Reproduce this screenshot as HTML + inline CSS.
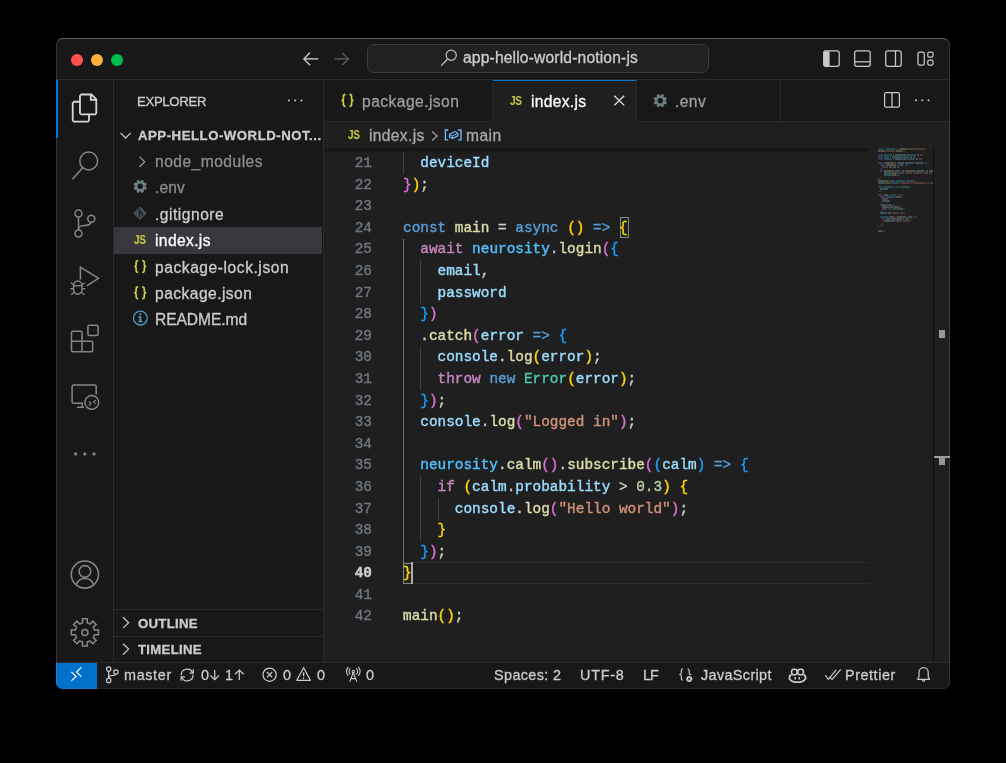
<!DOCTYPE html>
<html>
<head>
<meta charset="utf-8">
<title>index.js — app-hello-world-notion-js</title>
<style>
*{box-sizing:border-box;margin:0;padding:0}
html,body{width:1006px;height:763px;background:#000;overflow:hidden}
body{font-family:"Liberation Sans",sans-serif;color:#ccc;position:relative}
.a{position:absolute}
#win{position:absolute;left:0;top:0;width:1006px;height:763px;background:#181818;clip-path:inset(38px 56px 74px 56px round 7px)}
#frame{position:absolute;left:56px;top:38px;width:894px;height:651px;border-radius:7px;border:1px solid rgba(255,255,255,.13);border-top-color:rgba(255,255,255,.30);border-bottom-color:rgba(255,255,255,.07);pointer-events:none}
.t,#code,#nums{will-change:transform}
.t{-webkit-text-stroke:.3px}
#code,#nums{-webkit-text-stroke:.4px}
.bx{position:absolute;width:9px;height:21px;border:1px solid #858585;background:#1c241c}
.t{position:absolute;white-space:nowrap;line-height:20px;height:20px}
.ui{font-size:15.6px}
.sb{font-size:14.4px}
svg{position:absolute;overflow:visible}
/* editor */
#code{position:absolute;left:403px;top:153.1px;font-family:"Liberation Mono",monospace;font-size:14.4px;line-height:21.6px;color:#ccc}
#code div{height:21.6px;white-space:pre}
#nums{position:absolute;left:340px;width:32px;top:153.1px;font-family:"Liberation Mono",monospace;font-size:14.4px;line-height:21.6px;color:#6e7681;text-align:right}
#nums div{height:21.6px}
.k{color:#569cd6}.c{color:#c586c0}.f{color:#dcdcaa}.v{color:#9cdcfe}.n{color:#4fc1ff}.s{color:#ce9178}.m{color:#b5cea8}.y{color:#4ec9b0}
.b1{color:#ffd700}.b2{color:#da70d6}.b3{color:#179fff}
.g{position:absolute;width:1px;background:#404040}
</style>
</head>
<body>
<div id="win">

<!-- title bar -->
<div class="a" style="left:56px;top:38px;width:894px;height:42px;background:#181818;border-bottom:1px solid #2b2b2b"></div>
<div class="a" style="left:70.9px;top:53.9px;width:12.3px;height:12.3px;border-radius:50%;background:#ff4f4f"></div>
<div class="a" style="left:90.9px;top:53.9px;width:12.3px;height:12.3px;border-radius:50%;background:#ffb13c"></div>
<div class="a" style="left:110.9px;top:53.9px;width:12.3px;height:12.3px;border-radius:50%;background:#00bf4d"></div>
<div class="a" style="left:367px;top:44px;width:342px;height:29px;border-radius:7px;background:#212121;border:1px solid #3c3c3c"></div>

<!-- activity bar -->
<div class="a" style="left:56px;top:80px;width:58px;height:583px;border-right:1px solid #2b2b2b"></div>

<!-- side bar -->
<div class="a" style="left:114px;top:80px;width:210px;height:583px;border-right:1px solid #2b2b2b"></div>
<div class="a" style="left:114px;top:227px;width:208px;height:27px;background:#37373d"></div>
<div class="a" style="left:114px;top:609px;width:209px;height:1px;background:#2b2b2b"></div>
<div class="a" style="left:114px;top:636px;width:209px;height:1px;background:#2b2b2b"></div>

<!-- tabs -->
<div class="a" style="left:324px;top:80px;width:626px;height:42px;background:#181818;border-bottom:1px solid #2b2b2b"></div>
<div class="a" style="left:324px;top:80px;width:169px;height:42px;border-right:1px solid #2b2b2b;border-bottom:1px solid #2b2b2b"></div>
<div class="a" style="left:493px;top:80px;width:144px;height:42px;background:#1f1f1f;border-top:1px solid #0078d4;border-right:1px solid #2b2b2b"></div>
<div class="a" style="left:637px;top:80px;width:144px;height:42px;border-right:1px solid #2b2b2b;border-bottom:1px solid #2b2b2b"></div>

<!-- editor bg + breadcrumbs -->
<div class="a" style="left:324px;top:122px;width:626px;height:541px;background:#1f1f1f"></div>


<!-- editor content -->
<div class="a" style="left:324px;top:148px;width:545px;height:6px;background:linear-gradient(#000000aa,#00000000);opacity:.55"></div>
<div class="a" style="left:403px;top:562px;width:466px;height:21.7px;border-top:1px solid #2b2b2b;border-bottom:1px solid #2b2b2b"></div>
<div class="bx" style="left:403px;top:562.5px"></div>
<div class="bx" style="left:620px;top:217px"></div>
<div id="nums">
<div>21</div><div>22</div><div>23</div><div>24</div><div>25</div><div>26</div><div>27</div><div>28</div><div>29</div><div>30</div><div>31</div><div>32</div><div>33</div><div>34</div><div>35</div><div>36</div><div>37</div><div>38</div><div>39</div><div style="color:#ccc;font-weight:bold">40</div><div>41</div><div>42</div>
</div>
<div id="guides">
<div class="g" style="left:403px;top:152px;height:21.7px"></div>
<div class="g" style="left:403px;top:238.5px;height:324.0px;background:#707070"></div>
<div class="g" style="left:420px;top:260.1px;height:43.2px"></div>
<div class="g" style="left:420px;top:346.5px;height:43.2px"></div>
<div class="g" style="left:420px;top:476.1px;height:64.8px"></div>
<div class="g" style="left:438px;top:497.7px;height:21.6px"></div>
</div>
<div id="code">
<div>  <span class="v">deviceId</span></div>
<div><span class="b2">}</span><span class="b1">)</span>;</div>
<div> </div>
<div><span class="k">const</span> <span class="f">main</span> = <span class="k">async</span> <span class="b1">()</span> <span class="k">=&gt;</span> <span class="b1 bm">{</span></div>
<div>  <span class="c">await</span> <span class="n">neurosity</span>.<span class="f">login</span><span class="b2">(</span><span class="b3">{</span></div>
<div>    <span class="v">email</span>,</div>
<div>    <span class="v">password</span></div>
<div>  <span class="b3">}</span><span class="b2">)</span></div>
<div>  .<span class="f">catch</span><span class="b2">(</span><span class="v">error</span> <span class="k">=&gt;</span> <span class="b3">{</span></div>
<div>    <span class="v">console</span>.<span class="f">log</span><span class="b1">(</span><span class="v">error</span><span class="b1">)</span>;</div>
<div>    <span class="c">throw</span> <span class="k">new</span> <span class="y">Error</span><span class="b1">(</span><span class="v">error</span><span class="b1">)</span>;</div>
<div>  <span class="b3">}</span><span class="b2">)</span>;</div>
<div>  <span class="v">console</span>.<span class="f">log</span><span class="b2">(</span><span class="s">"Logged in"</span><span class="b2">)</span>;</div>
<div> </div>
<div>  <span class="n">neurosity</span>.<span class="f">calm</span><span class="b2">()</span>.<span class="f">subscribe</span><span class="b2">(</span><span class="b3">(</span><span class="v">calm</span><span class="b3">)</span> <span class="k">=&gt;</span> <span class="b3">{</span></div>
<div>    <span class="c">if</span> <span class="b1">(</span><span class="v">calm</span>.<span class="v">probability</span> &gt; <span class="m">0.3</span><span class="b1">)</span> <span class="b1">{</span></div>
<div>      <span class="v">console</span>.<span class="f">log</span><span class="b2">(</span><span class="s">"Hello world"</span><span class="b2">)</span>;</div>
<div>    <span class="b1">}</span></div>
<div>  <span class="b3">}</span><span class="b2">)</span>;</div>
<div><span class="b1 bm">}</span></div>
<div> </div>
<div><span class="f">main</span><span class="b1">()</span>;</div>
</div>
<div class="a" style="left:410.6px;top:562.3px;width:2.4px;height:21.5px;background:#aeafad"></div>

<!-- minimap -->
<svg class="a" style="left:0;top:0" width="1006" height="763" viewBox="0 0 1006 763" >
<g opacity=".4">
<rect x="878" y="148.4" width="5" height="1.3" fill="#569cd6"/>
<rect x="884" y="148.4" width="1" height="1.3" fill="#ffd700" opacity=".45"/>
<rect x="886" y="148.4" width="9" height="1.3" fill="#4fc1ff"/>
<rect x="896" y="148.4" width="1" height="1.3" fill="#ffd700" opacity=".45"/>
<rect x="898" y="148.4" width="1" height="1.3" fill="#cccccc"/>
<rect x="900" y="148.4" width="7" height="1.3" fill="#dcdcaa"/>
<rect x="907" y="148.4" width="1" height="1.3" fill="#ffd700" opacity=".45"/>
<rect x="908" y="148.4" width="16" height="1.3" fill="#ce9178"/>
<rect x="924" y="148.4" width="1" height="1.3" fill="#ffd700" opacity=".45"/>
<rect x="925" y="148.4" width="1" height="1.3" fill="#cccccc" opacity=".5"/>
<rect x="878" y="150.4" width="7" height="1.3" fill="#dcdcaa"/>
<rect x="885" y="150.4" width="1" height="1.3" fill="#ffd700" opacity=".45"/>
<rect x="886" y="150.4" width="8" height="1.3" fill="#ce9178"/>
<rect x="894" y="150.4" width="1" height="1.3" fill="#ffd700" opacity=".45"/>
<rect x="895" y="150.4" width="1" height="1.3" fill="#cccccc" opacity=".5"/>
<rect x="896" y="150.4" width="6" height="1.3" fill="#dcdcaa"/>
<rect x="902" y="150.4" width="2" height="1.3" fill="#ffd700" opacity=".45"/>
<rect x="904" y="150.4" width="1" height="1.3" fill="#cccccc" opacity=".5"/>
<rect x="878" y="154.4" width="5" height="1.3" fill="#569cd6"/>
<rect x="884" y="154.4" width="8" height="1.3" fill="#4fc1ff"/>
<rect x="893" y="154.4" width="1" height="1.3" fill="#cccccc"/>
<rect x="895" y="154.4" width="7" height="1.3" fill="#9cdcfe"/>
<rect x="902" y="154.4" width="1" height="1.3" fill="#cccccc" opacity=".5"/>
<rect x="903" y="154.4" width="3" height="1.3" fill="#9cdcfe"/>
<rect x="906" y="154.4" width="1" height="1.3" fill="#cccccc" opacity=".5"/>
<rect x="907" y="154.4" width="9" height="1.3" fill="#4fc1ff"/>
<rect x="917" y="154.4" width="2" height="1.3" fill="#cccccc"/>
<rect x="920" y="154.4" width="2" height="1.3" fill="#ce9178"/>
<rect x="922" y="154.4" width="1" height="1.3" fill="#cccccc" opacity=".5"/>
<rect x="878" y="156.4" width="5" height="1.3" fill="#569cd6"/>
<rect x="884" y="156.4" width="5" height="1.3" fill="#4fc1ff"/>
<rect x="890" y="156.4" width="1" height="1.3" fill="#cccccc"/>
<rect x="892" y="156.4" width="7" height="1.3" fill="#9cdcfe"/>
<rect x="899" y="156.4" width="1" height="1.3" fill="#cccccc" opacity=".5"/>
<rect x="900" y="156.4" width="3" height="1.3" fill="#9cdcfe"/>
<rect x="903" y="156.4" width="1" height="1.3" fill="#cccccc" opacity=".5"/>
<rect x="904" y="156.4" width="5" height="1.3" fill="#4fc1ff"/>
<rect x="910" y="156.4" width="2" height="1.3" fill="#cccccc"/>
<rect x="913" y="156.4" width="2" height="1.3" fill="#ce9178"/>
<rect x="915" y="156.4" width="1" height="1.3" fill="#cccccc" opacity=".5"/>
<rect x="878" y="158.4" width="5" height="1.3" fill="#569cd6"/>
<rect x="884" y="158.4" width="8" height="1.3" fill="#4fc1ff"/>
<rect x="893" y="158.4" width="1" height="1.3" fill="#cccccc"/>
<rect x="895" y="158.4" width="7" height="1.3" fill="#9cdcfe"/>
<rect x="902" y="158.4" width="1" height="1.3" fill="#cccccc" opacity=".5"/>
<rect x="903" y="158.4" width="3" height="1.3" fill="#9cdcfe"/>
<rect x="906" y="158.4" width="1" height="1.3" fill="#cccccc" opacity=".5"/>
<rect x="907" y="158.4" width="8" height="1.3" fill="#4fc1ff"/>
<rect x="916" y="158.4" width="2" height="1.3" fill="#cccccc"/>
<rect x="919" y="158.4" width="2" height="1.3" fill="#ce9178"/>
<rect x="921" y="158.4" width="1" height="1.3" fill="#cccccc" opacity=".5"/>
<rect x="878" y="162.4" width="5" height="1.3" fill="#569cd6"/>
<rect x="884" y="162.4" width="10" height="1.3" fill="#dcdcaa"/>
<rect x="895" y="162.4" width="1" height="1.3" fill="#cccccc"/>
<rect x="897" y="162.4" width="1" height="1.3" fill="#ffd700" opacity=".45"/>
<rect x="898" y="162.4" width="6" height="1.3" fill="#9cdcfe"/>
<rect x="905" y="162.4" width="9" height="1.3" fill="#9cdcfe"/>
<rect x="915" y="162.4" width="8" height="1.3" fill="#9cdcfe"/>
<rect x="923" y="162.4" width="1" height="1.3" fill="#ffd700" opacity=".45"/>
<rect x="925" y="162.4" width="2" height="1.3" fill="#569cd6"/>
<rect x="928" y="162.4" width="1" height="1.3" fill="#ffd700" opacity=".45"/>
<rect x="880" y="164.4" width="5" height="1.3" fill="#569cd6"/>
<rect x="886" y="164.4" width="10" height="1.3" fill="#dcdcaa"/>
<rect x="897" y="164.4" width="1" height="1.3" fill="#cccccc"/>
<rect x="899" y="164.4" width="1" height="1.3" fill="#da70d6" opacity=".45"/>
<rect x="900" y="164.4" width="3" height="1.3" fill="#9cdcfe"/>
<rect x="903" y="164.4" width="1" height="1.3" fill="#da70d6" opacity=".45"/>
<rect x="905" y="164.4" width="2" height="1.3" fill="#569cd6"/>
<rect x="908" y="164.4" width="1" height="1.3" fill="#da70d6" opacity=".45"/>
<rect x="882" y="166.4" width="6" height="1.3" fill="#c586c0"/>
<rect x="889" y="166.4" width="3" height="1.3" fill="#9cdcfe"/>
<rect x="893" y="166.4" width="3" height="1.3" fill="#cccccc"/>
<rect x="897" y="166.4" width="2" height="1.3" fill="#ce9178"/>
<rect x="899" y="166.4" width="1" height="1.3" fill="#cccccc" opacity=".5"/>
<rect x="880" y="168.4" width="1" height="1.3" fill="#da70d6" opacity=".45"/>
<rect x="881" y="168.4" width="1" height="1.3" fill="#cccccc" opacity=".5"/>
<rect x="880" y="170.4" width="2" height="1.3" fill="#c586c0"/>
<rect x="883" y="170.4" width="1" height="1.3" fill="#da70d6" opacity=".45"/>
<rect x="884" y="170.4" width="10" height="1.3" fill="#dcdcaa"/>
<rect x="894" y="170.4" width="1" height="1.3" fill="#179fff" opacity=".45"/>
<rect x="895" y="170.4" width="5" height="1.3" fill="#9cdcfe"/>
<rect x="900" y="170.4" width="1" height="1.3" fill="#179fff" opacity=".45"/>
<rect x="902" y="170.4" width="2" height="1.3" fill="#cccccc"/>
<rect x="905" y="170.4" width="10" height="1.3" fill="#dcdcaa"/>
<rect x="915" y="170.4" width="1" height="1.3" fill="#179fff" opacity=".45"/>
<rect x="916" y="170.4" width="8" height="1.3" fill="#9cdcfe"/>
<rect x="924" y="170.4" width="1" height="1.3" fill="#179fff" opacity=".45"/>
<rect x="926" y="170.4" width="2" height="1.3" fill="#cccccc"/>
<rect x="929" y="170.4" width="4" height="1.3" fill="#dcdcaa"/>
<rect x="884" y="172.4" width="7" height="1.3" fill="#9cdcfe"/>
<rect x="891" y="172.4" width="1" height="1.3" fill="#cccccc" opacity=".5"/>
<rect x="892" y="172.4" width="5" height="1.3" fill="#dcdcaa"/>
<rect x="897" y="172.4" width="1" height="1.3" fill="#179fff" opacity=".45"/>
<rect x="898" y="172.4" width="7" height="1.3" fill="#ce9178"/>
<rect x="906" y="172.4" width="6" height="1.3" fill="#ce9178"/>
<rect x="913" y="172.4" width="9" height="1.3" fill="#ce9178"/>
<rect x="923" y="172.4" width="5" height="1.3" fill="#ce9178"/>
<rect x="929" y="172.4" width="3" height="1.3" fill="#ce9178"/>
<rect x="884" y="174.4" width="7" height="1.3" fill="#9cdcfe"/>
<rect x="891" y="174.4" width="1" height="1.3" fill="#cccccc" opacity=".5"/>
<rect x="892" y="174.4" width="4" height="1.3" fill="#dcdcaa"/>
<rect x="896" y="174.4" width="1" height="1.3" fill="#179fff" opacity=".45"/>
<rect x="897" y="174.4" width="1" height="1.3" fill="#b5cea8"/>
<rect x="898" y="174.4" width="1" height="1.3" fill="#179fff" opacity=".45"/>
<rect x="899" y="174.4" width="1" height="1.3" fill="#cccccc" opacity=".5"/>
<rect x="880" y="176.4" width="1" height="1.3" fill="#da70d6" opacity=".45"/>
<rect x="878" y="178.4" width="1" height="1.3" fill="#ffd700" opacity=".45"/>
<rect x="879" y="178.4" width="1" height="1.3" fill="#cccccc" opacity=".5"/>
<rect x="878" y="180.4" width="10" height="1.3" fill="#dcdcaa"/>
<rect x="888" y="180.4" width="1" height="1.3" fill="#ffd700" opacity=".45"/>
<rect x="889" y="180.4" width="6" height="1.3" fill="#4fc1ff"/>
<rect x="896" y="180.4" width="9" height="1.3" fill="#4fc1ff"/>
<rect x="906" y="180.4" width="8" height="1.3" fill="#4fc1ff"/>
<rect x="914" y="180.4" width="1" height="1.3" fill="#ffd700" opacity=".45"/>
<rect x="915" y="180.4" width="1" height="1.3" fill="#cccccc" opacity=".5"/>
<rect x="878" y="182.4" width="7" height="1.3" fill="#9cdcfe"/>
<rect x="885" y="182.4" width="1" height="1.3" fill="#cccccc" opacity=".5"/>
<rect x="886" y="182.4" width="3" height="1.3" fill="#dcdcaa"/>
<rect x="889" y="182.4" width="1" height="1.3" fill="#ffd700" opacity=".45"/>
<rect x="890" y="182.4" width="3" height="1.3" fill="#ce9178"/>
<rect x="893" y="182.4" width="5" height="1.3" fill="#4fc1ff"/>
<rect x="898" y="182.4" width="1" height="1.3" fill="#569cd6"/>
<rect x="900" y="182.4" width="10" height="1.3" fill="#ce9178"/>
<rect x="911" y="182.4" width="2" height="1.3" fill="#ce9178"/>
<rect x="914" y="182.4" width="12" height="1.3" fill="#ce9178"/>
<rect x="927" y="182.4" width="2" height="1.3" fill="#ce9178"/>
<rect x="930" y="182.4" width="2" height="1.3" fill="#569cd6"/>
<rect x="932" y="182.4" width="1" height="1.3" fill="#4fc1ff"/>
<rect x="878" y="186.4" width="5" height="1.3" fill="#569cd6"/>
<rect x="884" y="186.4" width="9" height="1.3" fill="#4fc1ff"/>
<rect x="894" y="186.4" width="1" height="1.3" fill="#cccccc"/>
<rect x="896" y="186.4" width="3" height="1.3" fill="#569cd6"/>
<rect x="900" y="186.4" width="9" height="1.3" fill="#4ec9b0"/>
<rect x="909" y="186.4" width="1" height="1.3" fill="#ffd700" opacity=".45"/>
<rect x="910" y="186.4" width="1" height="1.3" fill="#da70d6" opacity=".45"/>
<rect x="880" y="188.4" width="8" height="1.3" fill="#9cdcfe"/>
<rect x="878" y="190.4" width="1" height="1.3" fill="#da70d6" opacity=".45"/>
<rect x="879" y="190.4" width="1" height="1.3" fill="#ffd700" opacity=".45"/>
<rect x="880" y="190.4" width="1" height="1.3" fill="#cccccc" opacity=".5"/>
<rect x="878" y="194.4" width="5" height="1.3" fill="#569cd6"/>
<rect x="884" y="194.4" width="4" height="1.3" fill="#dcdcaa"/>
<rect x="889" y="194.4" width="1" height="1.3" fill="#cccccc"/>
<rect x="891" y="194.4" width="5" height="1.3" fill="#569cd6"/>
<rect x="897" y="194.4" width="2" height="1.3" fill="#ffd700" opacity=".45"/>
<rect x="900" y="194.4" width="2" height="1.3" fill="#569cd6"/>
<rect x="903" y="194.4" width="1" height="1.3" fill="#ffd700" opacity=".45"/>
<rect x="880" y="196.4" width="5" height="1.3" fill="#c586c0"/>
<rect x="886" y="196.4" width="9" height="1.3" fill="#4fc1ff"/>
<rect x="895" y="196.4" width="1" height="1.3" fill="#cccccc" opacity=".5"/>
<rect x="896" y="196.4" width="5" height="1.3" fill="#dcdcaa"/>
<rect x="901" y="196.4" width="1" height="1.3" fill="#da70d6" opacity=".45"/>
<rect x="902" y="196.4" width="1" height="1.3" fill="#179fff" opacity=".45"/>
<rect x="882" y="198.4" width="5" height="1.3" fill="#9cdcfe"/>
<rect x="887" y="198.4" width="1" height="1.3" fill="#cccccc" opacity=".5"/>
<rect x="882" y="200.4" width="8" height="1.3" fill="#9cdcfe"/>
<rect x="880" y="202.4" width="1" height="1.3" fill="#179fff" opacity=".45"/>
<rect x="881" y="202.4" width="1" height="1.3" fill="#da70d6" opacity=".45"/>
<rect x="880" y="204.4" width="1" height="1.3" fill="#cccccc" opacity=".5"/>
<rect x="881" y="204.4" width="5" height="1.3" fill="#dcdcaa"/>
<rect x="886" y="204.4" width="1" height="1.3" fill="#da70d6" opacity=".45"/>
<rect x="887" y="204.4" width="5" height="1.3" fill="#9cdcfe"/>
<rect x="893" y="204.4" width="2" height="1.3" fill="#569cd6"/>
<rect x="896" y="204.4" width="1" height="1.3" fill="#179fff" opacity=".45"/>
<rect x="882" y="206.4" width="7" height="1.3" fill="#9cdcfe"/>
<rect x="889" y="206.4" width="1" height="1.3" fill="#cccccc" opacity=".5"/>
<rect x="890" y="206.4" width="3" height="1.3" fill="#dcdcaa"/>
<rect x="893" y="206.4" width="1" height="1.3" fill="#ffd700" opacity=".45"/>
<rect x="894" y="206.4" width="5" height="1.3" fill="#9cdcfe"/>
<rect x="899" y="206.4" width="1" height="1.3" fill="#ffd700" opacity=".45"/>
<rect x="900" y="206.4" width="1" height="1.3" fill="#cccccc" opacity=".5"/>
<rect x="882" y="208.4" width="5" height="1.3" fill="#c586c0"/>
<rect x="888" y="208.4" width="3" height="1.3" fill="#569cd6"/>
<rect x="892" y="208.4" width="5" height="1.3" fill="#4ec9b0"/>
<rect x="897" y="208.4" width="1" height="1.3" fill="#ffd700" opacity=".45"/>
<rect x="898" y="208.4" width="5" height="1.3" fill="#9cdcfe"/>
<rect x="903" y="208.4" width="1" height="1.3" fill="#ffd700" opacity=".45"/>
<rect x="904" y="208.4" width="1" height="1.3" fill="#cccccc" opacity=".5"/>
<rect x="880" y="210.4" width="1" height="1.3" fill="#179fff" opacity=".45"/>
<rect x="881" y="210.4" width="1" height="1.3" fill="#da70d6" opacity=".45"/>
<rect x="882" y="210.4" width="1" height="1.3" fill="#cccccc" opacity=".5"/>
<rect x="880" y="212.4" width="7" height="1.3" fill="#9cdcfe"/>
<rect x="887" y="212.4" width="1" height="1.3" fill="#cccccc" opacity=".5"/>
<rect x="888" y="212.4" width="3" height="1.3" fill="#dcdcaa"/>
<rect x="891" y="212.4" width="1" height="1.3" fill="#da70d6" opacity=".45"/>
<rect x="892" y="212.4" width="7" height="1.3" fill="#ce9178"/>
<rect x="900" y="212.4" width="3" height="1.3" fill="#ce9178"/>
<rect x="903" y="212.4" width="1" height="1.3" fill="#da70d6" opacity=".45"/>
<rect x="904" y="212.4" width="1" height="1.3" fill="#cccccc" opacity=".5"/>
<rect x="880" y="216.4" width="9" height="1.3" fill="#4fc1ff"/>
<rect x="889" y="216.4" width="1" height="1.3" fill="#cccccc" opacity=".5"/>
<rect x="890" y="216.4" width="4" height="1.3" fill="#dcdcaa"/>
<rect x="894" y="216.4" width="2" height="1.3" fill="#da70d6" opacity=".45"/>
<rect x="896" y="216.4" width="1" height="1.3" fill="#cccccc" opacity=".5"/>
<rect x="897" y="216.4" width="9" height="1.3" fill="#dcdcaa"/>
<rect x="906" y="216.4" width="1" height="1.3" fill="#da70d6" opacity=".45"/>
<rect x="907" y="216.4" width="1" height="1.3" fill="#179fff" opacity=".45"/>
<rect x="908" y="216.4" width="4" height="1.3" fill="#9cdcfe"/>
<rect x="912" y="216.4" width="1" height="1.3" fill="#179fff" opacity=".45"/>
<rect x="914" y="216.4" width="2" height="1.3" fill="#569cd6"/>
<rect x="917" y="216.4" width="1" height="1.3" fill="#179fff" opacity=".45"/>
<rect x="882" y="218.4" width="2" height="1.3" fill="#c586c0"/>
<rect x="885" y="218.4" width="1" height="1.3" fill="#ffd700" opacity=".45"/>
<rect x="886" y="218.4" width="4" height="1.3" fill="#9cdcfe"/>
<rect x="890" y="218.4" width="1" height="1.3" fill="#cccccc" opacity=".5"/>
<rect x="891" y="218.4" width="11" height="1.3" fill="#9cdcfe"/>
<rect x="903" y="218.4" width="1" height="1.3" fill="#cccccc"/>
<rect x="905" y="218.4" width="3" height="1.3" fill="#b5cea8"/>
<rect x="908" y="218.4" width="1" height="1.3" fill="#ffd700" opacity=".45"/>
<rect x="910" y="218.4" width="1" height="1.3" fill="#ffd700" opacity=".45"/>
<rect x="884" y="220.4" width="7" height="1.3" fill="#9cdcfe"/>
<rect x="891" y="220.4" width="1" height="1.3" fill="#cccccc" opacity=".5"/>
<rect x="892" y="220.4" width="3" height="1.3" fill="#dcdcaa"/>
<rect x="895" y="220.4" width="1" height="1.3" fill="#da70d6" opacity=".45"/>
<rect x="896" y="220.4" width="6" height="1.3" fill="#ce9178"/>
<rect x="903" y="220.4" width="6" height="1.3" fill="#ce9178"/>
<rect x="909" y="220.4" width="1" height="1.3" fill="#da70d6" opacity=".45"/>
<rect x="910" y="220.4" width="1" height="1.3" fill="#cccccc" opacity=".5"/>
<rect x="882" y="222.4" width="1" height="1.3" fill="#ffd700" opacity=".45"/>
<rect x="880" y="224.4" width="1" height="1.3" fill="#179fff" opacity=".45"/>
<rect x="881" y="224.4" width="1" height="1.3" fill="#da70d6" opacity=".45"/>
<rect x="882" y="224.4" width="1" height="1.3" fill="#cccccc" opacity=".5"/>
<rect x="878" y="226.4" width="1" height="1.3" fill="#ffd700" opacity=".45"/>
<rect x="878" y="230.4" width="4" height="1.3" fill="#dcdcaa"/>
<rect x="882" y="230.4" width="2" height="1.3" fill="#ffd700" opacity=".45"/>
<rect x="884" y="230.4" width="1" height="1.3" fill="#cccccc" opacity=".5"/>
</g></svg>
<div class="a" style="left:933px;top:148px;width:1px;height:515px;background:#0c0e11"></div>
<div class="a" style="left:939px;top:330px;width:6px;height:8px;background:#979797"></div>
<div class="a" style="left:934px;top:456px;width:16px;height:2px;background:#9c9c9c"></div>
<div class="a" style="left:939px;top:458px;width:6px;height:7px;background:#979797"></div>

<!-- status bar -->
<div class="a" style="left:56px;top:662px;width:894px;height:28px;background:#181818;border-top:1px solid #2b2b2b"></div>
<div class="a" style="left:56px;top:663px;width:41px;height:27px;background:#0070cb"></div>

<!--ICONS-START-->
<svg class="a" style="left:0;top:0" width="1006" height="763" viewBox="0 0 1006 763" fill="none" stroke-linecap="butt" stroke-linejoin="miter">
<g stroke="#c8c8c8" stroke-width="1.4"><path d="M318.2 58.9H304"/><path d="M310.1 52.6L303.9 58.9L310.1 65.2"/></g>
<g stroke="#5c5c5c" stroke-width="1.4"><path d="M334.6 58.9H348.4"/><path d="M342.3 52.9L348.5 58.9L342.3 64.9"/></g>
<g stroke="#bdbdbd" stroke-width="1.25"><circle cx="451.2" cy="55.2" r="5.1"/><path d="M447.6 59L441.2 65.7"/></g>
<g stroke="#c8c8c8" stroke-width="1.25">
<rect x="823.7" y="50.9" width="15.5" height="15.4" rx="2"/><path d="M824 51.3H829.6V66H824Z" fill="#c8c8c8" stroke="none"/>
<rect x="854.7" y="50.9" width="15.5" height="15.4" rx="2"/><path d="M854.7 61.8H870.2"/>
<rect x="885.7" y="50.9" width="15.5" height="15.4" rx="2"/><path d="M895.5 50.9V66.3"/>
<rect x="918" y="52.1" width="6.3" height="13" rx="1.6"/><rect x="927.8" y="52.1" width="5.2" height="5" rx="1.4"/><rect x="927.8" y="60.2" width="5.2" height="5" rx="1.4"/>
</g>
<g stroke="#cbcb41" stroke-width="1.7"><path d="M345.50 94.41C343.40 94.41 343.40 95.42 343.40 96.85V98.67C343.40 99.89 342.60 100.40 341.50 100.40C342.60 100.40 343.40 100.91 343.40 102.13V103.95C343.40 105.38 343.40 106.39 345.50 106.39"/><path d="M349.50 94.41C351.60 94.41 351.60 95.42 351.60 96.85V98.67C351.60 99.89 352.40 100.40 353.50 100.40C352.40 100.40 351.60 100.91 351.60 102.13V103.95C351.60 105.38 351.60 106.39 349.50 106.39"/></g>
<g stroke="#cbcb41" stroke-width="1.7"><path d="M138.20 260.51C136.10 260.51 136.10 261.52 136.10 262.95V264.77C136.10 265.99 135.30 266.50 134.20 266.50C135.30 266.50 136.10 267.01 136.10 268.23V270.05C136.10 271.48 136.10 272.49 138.20 272.49"/><path d="M142.20 260.51C144.30 260.51 144.30 261.52 144.30 262.95V264.77C144.30 265.99 145.10 266.50 146.20 266.50C145.10 266.50 144.30 267.01 144.30 268.23V270.05C144.30 271.48 144.30 272.49 142.20 272.49"/></g>
<g stroke="#cbcb41" stroke-width="1.7"><path d="M138.20 286.81C136.10 286.81 136.10 287.82 136.10 289.25V291.07C136.10 292.29 135.30 292.80 134.20 292.80C135.30 292.80 136.10 293.31 136.10 294.53V296.35C136.10 297.78 136.10 298.79 138.20 298.79"/><path d="M142.20 286.81C144.30 286.81 144.30 287.82 144.30 289.25V291.07C144.30 292.29 145.10 292.80 146.20 292.80C145.10 292.80 144.30 293.31 144.30 294.53V296.35C144.30 297.78 144.30 298.79 142.20 298.79"/></g>
<g stroke="#e4e4e4" stroke-width="1.3"><path d="M614.2 95.8L624.2 105.4M624.2 95.8L614.2 105.4"/></g>
<path d="M660.87 95.53 L661.63 94.03 L664.08 95.05 L663.55 96.64 L664.36 97.45 L665.95 96.92 L666.97 99.37 L665.47 100.13 L665.47 101.27 L666.97 102.03 L665.95 104.48 L664.36 103.95 L663.55 104.76 L664.08 106.35 L661.63 107.37 L660.87 105.87 L659.73 105.87 L658.97 107.37 L656.52 106.35 L657.05 104.76 L656.24 103.95 L654.65 104.48 L653.63 102.03 L655.13 101.27 L655.13 100.13 L653.63 99.37 L654.65 96.92 L656.24 97.45 L657.05 96.64 L656.52 95.05 L658.97 94.03 L659.73 95.53Z" fill="#6d8086"/><circle cx="660.3" cy="100.7" r="2.7" fill="#181818"/>
<path d="M140.77 181.13 L141.53 179.63 L143.98 180.65 L143.45 182.24 L144.26 183.05 L145.85 182.52 L146.87 184.97 L145.37 185.73 L145.37 186.87 L146.87 187.63 L145.85 190.08 L144.26 189.55 L143.45 190.36 L143.98 191.95 L141.53 192.97 L140.77 191.47 L139.63 191.47 L138.87 192.97 L136.42 191.95 L136.95 190.36 L136.14 189.55 L134.55 190.08 L133.53 187.63 L135.03 186.87 L135.03 185.73 L133.53 184.97 L134.55 182.52 L136.14 183.05 L136.95 182.24 L136.42 180.65 L138.87 179.63 L139.63 181.13Z" fill="#6d8086"/><circle cx="140.2" cy="186.3" r="2.7" fill="#181818"/>
<g stroke="#c8c8c8" stroke-width="1.25"><rect x="884.6" y="92.6" width="14.8" height="14.6" rx="1.6"/><path d="M892 92.6V107.2"/></g>
<circle cx="916.1" cy="100.3" r="1" fill="#c8c8c8"/>
<circle cx="922.3" cy="100.3" r="1" fill="#c8c8c8"/>
<circle cx="928.5" cy="100.3" r="1" fill="#c8c8c8"/>
<circle cx="289" cy="100.4" r="1" fill="#c8c8c8"/>
<circle cx="295.2" cy="100.4" r="1" fill="#c8c8c8"/>
<circle cx="301.4" cy="100.4" r="1" fill="#c8c8c8"/>
<path d="M432 131.4L437.3 135.9L432 140.4" stroke="#a0a0a0" stroke-width="1.25"/>
<g stroke="#75beff" stroke-width="1.3"><path d="M448.2 130H445.4V139.8H448.2"/><path d="M458.2 130H461V139.8H458.2"/><path d="M449.500 134.300L455.100 131.600L457.900 133.300V135.800L452.200 138.600L449.500 136.900Z" stroke-width="1.15"/><path d="M449.700 134.500L452.300 136.100L457.800 133.400M452.300 136.100V138.400" stroke-width="0.95"/></g>
<path d="M120.5 132.9L125.6 138L130.7 132.9" stroke="#c8c8c8" stroke-width="1.25"/>
<path d="M139.6 156.6L144.6 161.8L139.6 167" stroke="#9a9a9a" stroke-width="1.25"/>
<path d="M123.1 617.3L128.6 622.7L123.1 628.1" stroke="#c8c8c8" stroke-width="1.25"/>
<path d="M123.1 643.7L128.6 649.1L123.1 654.5" stroke="#c8c8c8" stroke-width="1.25"/>
<path d="M140 206.5L146.8 213.3L140 220.1L133.2 213.3Z" fill="#41535b"/>
<g stroke="#181818" stroke-width="1.1"><path d="M139.3 208.5V217.6"/><path d="M139.5 211L142.4 213.6V216.4"/></g>
<circle cx="140.4" cy="318.1" r="6.9" stroke="#519aba" stroke-width="1.3"/>
<g fill="#519aba"><circle cx="140.2" cy="314.3" r="1.15"/><path d="M138.3 316.3H141.3V321.1H142.5V322.2H138.2V321.1H139.4V317.4H138.3Z"/></g>
<path transform="translate(70.6 93.6) scale(1.2083333333333333)" fill="#d7d7d7" d="M17.5 0h-9L7 1.5V6H2.5L1 7.500v15.07L2.5 24h12.07L16 22.57V18h4.7l1.3-1.43V4.5L17.500 0zm0 2.120l2.380 2.380H17.500V2.120zm-3 20.380h-12v-15H7v9.07L8.500 18h6v4.500zm6-6h-12v-15H16V6h4.500v10.500z"/>
<g stroke="#868686" stroke-width="1.5"><circle cx="88.7" cy="161" r="8.9"/><path d="M82.7 167.8L72.4 179.2"/></g>
<g stroke="#868686" stroke-width="1.5"><circle cx="78.5" cy="213.6" r="3.5"/><circle cx="78.5" cy="233.6" r="3.5"/><circle cx="91.3" cy="218.8" r="3.5"/><path d="M78.5 217.1V230.1"/><path d="M78.5 229.5C78.5 225.6 81.5 225.4 85 225.4C88.8 225.4 90.6 224.3 91.1 222.3"/></g>
<g stroke="#868686" stroke-width="1.5"><path d="M80.4 279.4V267L98.500 278.300L86.800 285.900"/>
<path d="M73.6 285.7V289.3A4.2 4.9 0 0 0 82 289.3V285.7A4.2 4.600 0 0 0 73.600 285.7Z"/><path d="M73.6 285.7H82" stroke-width="1.400"/>
<path d="M73.8 284.9L70.900 282.800M81.800 284.900L84.700 282.800M73.600 288.700H70.300M82 288.700H85.300M74.100 292.300L71.200 294.700M81.500 292.300L84.400 294.700" stroke-width="1.400"/></g>
<g stroke="#868686" stroke-width="1.5"><path d="M71.5 341.3V332.8Q71.5 331.3 73 331.3H80.5Q82 331.300 82 332.8V341.3"/><path d="M71.5 341.3H91.2Q92.700 341.300 92.700 342.800V350.2Q92.7 351.700 91.200 351.700H73Q71.5 351.700 71.5 350.200Z"/><path d="M82 341.3V351.7"/><rect x="87.900" y="325.2" width="10.2" height="10.2" rx="1.5"/></g>
<g stroke="#868686" stroke-width="1.5"><path d="M83 403.3H73.6Q72.1 403.300 72.100 401.800V386.400Q72.1 384.900 73.600 384.900H94.700Q96.200 384.900 96.200 386.400V394.600"/><path d="M82.300 403.3V407.200M77 407.200H84" stroke-width="1.4"/><circle cx="91.8" cy="402.3" r="6.900"/><path d="M88.900 401.300L90.800 403.400L89.100 405.900M95.500 400L93.600 402L95.500 403.900" stroke-width="1.2"/></g>
<circle cx="75.6" cy="453.9" r="1.6" fill="#868686"/>
<circle cx="84.8" cy="453.9" r="1.6" fill="#868686"/>
<circle cx="94" cy="453.9" r="1.6" fill="#868686"/>
<g stroke="#868686" stroke-width="1.55"><circle cx="84.9" cy="574.5" r="13.6"/><circle cx="84.9" cy="571.4" r="5.8"/><path d="M76.300 584.800A9 9 0 0 1 93.500 584.800"/></g>
<path d="M82.59 622.77 L82.53 618.81 L87.27 618.81 L87.21 622.77 L90.07 623.96 L92.84 621.11 L96.19 624.46 L93.34 627.23 L94.53 630.09 L98.49 630.03 L98.49 634.77 L94.53 634.71 L93.34 637.57 L96.19 640.34 L92.84 643.69 L90.07 640.84 L87.21 642.03 L87.27 645.99 L82.53 645.99 L82.59 642.03 L79.73 640.84 L76.96 643.69 L73.61 640.34 L76.46 637.57 L75.27 634.71 L71.31 634.77 L71.31 630.03 L75.27 630.09 L76.46 627.23 L73.61 624.46 L76.96 621.11 L79.73 623.96Z" stroke="#868686" stroke-width="1.55" stroke-linejoin="miter"/><circle cx="84.9" cy="632.4" r="3" stroke="#868686" stroke-width="1.55"/>
<g stroke="#fff" stroke-width="1.2"><path d="M71.3 671.900L76.100 676.400L71.300 680.900"/><path d="M81.400 667.400L76.600 672L81.400 676.600"/></g>
<g stroke="#cccccc" stroke-width="1.2"><circle cx="108.7" cy="669.1" r="2.2"/><circle cx="108.700" cy="680.4" r="2.2"/><circle cx="115.9" cy="672" r="2.2"/><path d="M108.7 671.300V678.200"/><path d="M108.7 677.9C108.700 675.600 110.900 675.600 112.600 675.500C114.700 675.400 115.700 675 115.900 674.200"/></g>
<g stroke="#cccccc" stroke-width="1.2"><path d="M181.300 675.200A5.900 5.900 0 0 1 192.700 672.900"/><path d="M193.100 674.800A5.900 5.900 0 0 1 181.700 677.100"/><path d="M193.300 669.300V673.100H189.500"/><path d="M181.100 680.700V676.900H184.900"/></g>
<g stroke="#cccccc" stroke-width="1.25"><path d="M214.700 669.900V679.600M210.400 675.500L214.700 679.700L219 675.500"/><path d="M239.300 679.900V670.200M235 674.300L239.300 670.100L243.600 674.300"/></g>
<g stroke="#cccccc" stroke-width="1.2"><circle cx="269.600" cy="674.7" r="6.600"/><path d="M266.900 672L272.300 677.400M272.300 672L266.900 677.400"/></g>
<g stroke="#cccccc" stroke-width="1.2" stroke-linejoin="round"><path d="M303.600 667.700L310.400 680.300H296.800Z"/><path d="M303.600 672.200V676.400" stroke-width="1.3"/><circle cx="303.6" cy="678.2" r="0.5" fill="#cccccc" stroke-width="0.6"/></g>
<g stroke="#cccccc" stroke-width="1.1"><path d="M353.3 672.500L349.800 681.600M353.300 672.500L356.800 681.600M351 678.600H355.600"/><circle cx="353.300" cy="671.4" r="1.2"/><path d="M350.300 668.400A4.200 4.200 0 0 0 350.300 674.400M356.300 668.400A4.200 4.200 0 0 1 356.300 674.400"/><path d="M348.300 666.900A6.600 6.600 0 0 0 348.300 675.900M358.300 666.900A6.600 6.600 0 0 1 358.300 675.900"/></g>
<g stroke="#cccccc" stroke-width="1.15"><path d="M682.900 668.900C681.400 668.900 681.300 669.700 681.300 670.900V672.900C681.300 673.900 680.700 674.500 679.300 674.500C680.700 674.500 681.300 675.100 681.300 676.100V678.100C681.300 679.300 681.400 680.200 682.900 680.200"/><path d="M687.600 668.900C689.100 668.900 689.200 669.700 689.200 670.900V672.900C689.200 673.900 689.800 674.500 691.300 674.500"/><circle cx="689.300" cy="679" r="2.700" fill="#cccccc" stroke-width="0.8"/><path d="M688.100 677.800L690.500 680.200M690.500 677.800L688.100 680.200" stroke="#181818" stroke-width="1"/></g>
<g stroke="#cccccc" stroke-width="1.8"><path d="M791.400 674.600C789.900 675.300 789.500 676.200 789.500 677.300V678.900C791 681 794.200 682.200 797.500 682.200C800.800 682.200 804 681 805.500 678.900V677.300C805.500 676.200 805.100 675.300 803.600 674.600"/><rect x="791.600" y="669.200" width="5.500" height="5.600" rx="2.300" stroke-width="1.6"/><rect x="797.900" y="669.200" width="5.500" height="5.600" rx="2.300" stroke-width="1.600"/><path d="M795.100 677.100V679.600M799.300 677.100V679.600" stroke-width="1.5"/></g>
<g stroke="#cccccc" stroke-width="1.15"><path d="M825.300 675L828.300 679.500L836.200 669.800"/><path d="M829.300 676.600L832.100 679.500L840.800 669.400"/></g>
<g stroke="#cccccc" stroke-width="1.2"><path d="M917.700 679.300H929.500L928.200 676.500V672.200A4.600 4.600 0 0 0 919 672.200V676.500Z" stroke-linejoin="round"/><path d="M922.200 679.700A1.400 1.500 0 0 0 925 679.700"/></g>
</svg>
<div class="t" style="left:509.9px;top:90.63px;font-size:12.6px;font-weight:bold;color:#cbcb41;letter-spacing:-0.2px;-webkit-text-stroke:0;transform:scaleX(.79);transform-origin:0 0">JS</div>
<div class="t" style="left:348.2px;top:124.53px;font-size:12.6px;font-weight:bold;color:#cbcb41;letter-spacing:-0.2px;-webkit-text-stroke:0;transform:scaleX(.79);transform-origin:0 0">JS</div>
<div class="t" style="left:133.8px;top:229.63px;font-size:12.6px;font-weight:bold;color:#cbcb41;letter-spacing:-0.2px;-webkit-text-stroke:0;transform:scaleX(.79);transform-origin:0 0">JS</div>
<!--ICONS-END-->
<!--TEXT-START-->
<div class="t" id="title" style="left:463.40px;top:48.29px;font-size:15.6px;font-weight:normal;color:#cccccc;letter-spacing:0.171px">app-hello-world-notion-js</div>
<div class="t" id="tab1" style="left:361.50px;top:91.69px;font-size:15.6px;font-weight:normal;color:#9d9d9d;letter-spacing:0.455px">package.json</div>
<div class="t" id="tab2" style="left:530.50px;top:91.69px;font-size:15.6px;font-weight:normal;color:#ffffff;letter-spacing:0.314px">index.js</div>
<div class="t" id="tab3" style="left:674.60px;top:91.69px;font-size:15.6px;font-weight:normal;color:#9d9d9d;letter-spacing:0.400px">.env</div>
<div class="t" id="bc1" style="left:368.50px;top:125.89px;font-size:15.6px;font-weight:normal;color:#a9a9a9;letter-spacing:0.343px">index.js</div>
<div class="t" id="bc2" style="left:465.70px;top:125.89px;font-size:15.6px;font-weight:normal;color:#a9a9a9;letter-spacing:0.433px">main</div>
<div class="t" id="expl" style="left:136.60px;top:92.13px;font-size:13.2px;font-weight:normal;color:#cccccc;letter-spacing:-0.343px">EXPLORER</div>
<div class="t" id="root" style="left:137.60px;top:126.03px;font-size:13.2px;font-weight:bold;color:#cccccc;letter-spacing:0.524px">APP-HELLO-WORLD-NOT...</div>
<div class="t" id="r1" style="left:154.50px;top:152.09px;font-size:15.6px;font-weight:normal;color:#8c8c8c;letter-spacing:0.473px">node_modules</div>
<div class="t" id="r2" style="left:154.50px;top:178.49px;font-size:15.6px;font-weight:normal;color:#8c8c8c;letter-spacing:0.100px">.env</div>
<div class="t" id="r3" style="left:154.50px;top:204.99px;font-size:15.6px;font-weight:normal;color:#cccccc;letter-spacing:0.511px">.gitignore</div>
<div class="t" id="r4" style="left:154.50px;top:231.29px;font-size:15.6px;font-weight:normal;color:#ffffff;letter-spacing:0.371px">index.js</div>
<div class="t" id="r5" style="left:154.50px;top:257.99px;font-size:15.6px;font-weight:normal;color:#cccccc;letter-spacing:0.550px">package-lock.json</div>
<div class="t" id="r6" style="left:154.50px;top:283.99px;font-size:15.6px;font-weight:normal;color:#cccccc;letter-spacing:0.455px">package.json</div>
<div class="t" id="r7" style="left:154.50px;top:310.19px;font-size:15.6px;font-weight:normal;color:#cccccc;letter-spacing:-0.075px">README.md</div>
<div class="t" id="outl" style="left:137.90px;top:614.03px;font-size:13.2px;font-weight:bold;color:#cccccc;letter-spacing:0.267px">OUTLINE</div>
<div class="t" id="time" style="left:138.20px;top:640.03px;font-size:13.2px;font-weight:bold;color:#cccccc;letter-spacing:0.286px">TIMELINE</div>
<div class="t" id="s1" style="left:124.20px;top:664.91px;font-size:14.4px;font-weight:normal;color:#cccccc;letter-spacing:0.640px">master</div>
<div class="t" id="s2a" style="left:200.50px;top:664.91px;font-size:14.4px;font-weight:normal;color:#cccccc;letter-spacing:0.000px">0</div>
<div class="t" id="s2b" style="left:225.00px;top:664.91px;font-size:14.4px;font-weight:normal;color:#cccccc;letter-spacing:0.000px">1</div>
<div class="t" id="s3" style="left:282.80px;top:664.91px;font-size:14.4px;font-weight:normal;color:#cccccc;letter-spacing:0.000px">0</div>
<div class="t" id="s4" style="left:316.60px;top:664.91px;font-size:14.4px;font-weight:normal;color:#cccccc;letter-spacing:0.000px">0</div>
<div class="t" id="s5" style="left:365.90px;top:664.91px;font-size:14.4px;font-weight:normal;color:#cccccc;letter-spacing:0.000px">0</div>
<div class="t" id="s6" style="left:493.80px;top:664.91px;font-size:14.4px;font-weight:normal;color:#cccccc;letter-spacing:0.388px">Spaces: 2</div>
<div class="t" id="s7" style="left:580.40px;top:664.91px;font-size:14.4px;font-weight:normal;color:#cccccc;letter-spacing:0.750px">UTF-8</div>
<div class="t" id="s8" style="left:643.10px;top:664.91px;font-size:14.4px;font-weight:normal;color:#cccccc;letter-spacing:-0.900px">LF</div>
<div class="t" id="s9" style="left:701.20px;top:664.91px;font-size:14.4px;font-weight:normal;color:#cccccc;letter-spacing:0.367px">JavaScript</div>
<div class="t" id="s10" style="left:845.20px;top:664.91px;font-size:14.4px;font-weight:normal;color:#cccccc;letter-spacing:0.557px">Prettier</div>
<!--TEXT-END-->
</div>
<div id="frame"></div>
<div class="a" style="left:56px;top:80px;width:2px;height:58px;background:#0078d4"></div>
</body>
</html>
